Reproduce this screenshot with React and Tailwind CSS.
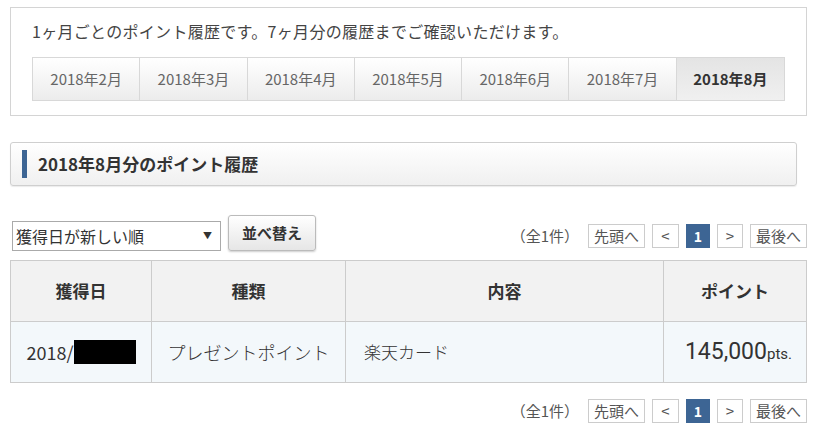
import React from 'react';

const months = ['2018年2月', '2018年3月', '2018年4月', '2018年5月', '2018年6月', '2018年7月', '2018年8月'];

const Pager = () => (
    <div className="flex items-center justify-end gap-[7px] text-[15px] text-[#555]">
        <span className="mr-[2px]">（全1件）</span>
        <span className="h-[24px] px-[5px] flex items-center border border-[#ccc] bg-white">先頭へ</span>
        <span className="h-[24px] w-[27px] flex items-center justify-center border border-[#ccc] bg-white">&lt;</span>
        <span className="h-[24px] w-[24px] flex items-center justify-center bg-[#3d6594] text-white font-bold text-[14px]">1</span>
        <span className="h-[24px] w-[26px] flex items-center justify-center border border-[#ccc] bg-white">&gt;</span>
        <span className="h-[24px] px-[5px] flex items-center border border-[#ccc] bg-white">最後へ</span>
    </div>
);

export default function App() {
    return (
        <div
            className="w-[820px] h-[443px] overflow-hidden bg-white pl-[10px] pr-[13px] text-[#333]"
            style={{ fontFamily: '"Noto Sans CJK JP", "Noto Sans", sans-serif' }}
        >
            {/* month selector */}
            <div className="mt-[7px] border border-[#d4d4d4] px-[21px] pt-[11px] pb-[14px]">
                <p className="text-[16px] leading-[24px] tracking-[0.3px] text-[#444]">1ヶ月ごとのポイント履歴です。7ヶ月分の履歴までご確認いただけます。</p>
                <div className="mt-[14px] grid grid-cols-7 border border-[#d8d8d8]">
                    {months.map((m, i) => (
                        <div
                            key={m}
                            className={
                                i === months.length - 1
                                    ? 'h-[42px] flex items-center justify-center bg-gradient-to-b from-[#e4e4e4] to-[#f0f0f0] text-[15px] font-bold text-[#333]'
                                    : 'h-[42px] flex items-center justify-center border-r border-[#d8d8d8] bg-gradient-to-b from-white to-[#ececec] text-[15px] text-[#666]'
                            }
                        >
                            {m}
                        </div>
                    ))}
                </div>
            </div>

            {/* section header */}
            <div className="mt-[26px] w-[787px] h-[44px] flex items-center border border-[#cfcfcf] rounded-[3px] bg-gradient-to-b from-white to-[#f0f0f0] shadow-[0_1px_1px_rgba(0,0,0,0.08)] pl-[11px]">
                <span className="w-[5px] h-[28px] bg-[#3d6594] mr-[11px]"></span>
                <h2 className="text-[17px] font-bold text-[#333]">2018年8月分のポイント履歴</h2>
            </div>

            {/* sort + pager */}
            <div className="mt-[29px] flex items-center">
                <div className="mt-[6px] ml-[2px] w-[209px] h-[30px] border border-[#aaa] bg-white flex items-center justify-between pl-[3px] pr-[8px] text-[16px] text-[#333]">
                    <span>獲得日が新しい順</span>
                    <span className="text-[9px]">▼</span>
                </div>
                <button className="ml-[7px] w-[88px] h-[36px] border border-[#bbb] rounded-[3px] bg-gradient-to-b from-white to-[#e6e6e6] shadow-[0_1px_2px_rgba(0,0,0,0.2)] text-[15px] font-bold text-[#333]">
                    並べ替え
                </button>
                <div className="flex-1 mt-[6px]">
                    <Pager />
                </div>
            </div>

            {/* table */}
            <table className="mt-[9px] w-[797px] border-collapse border border-[#ccc]">
                <thead>
                    <tr className="h-[61px] bg-[#f2f2f2] text-[17px] font-bold text-[#333]">
                        <th className="w-[141px] border border-[#ccc]">獲得日</th>
                        <th className="w-[194px] border border-[#ccc]">種類</th>
                        <th className="w-[318px] border border-[#ccc]">内容</th>
                        <th className="border border-[#ccc]">ポイント</th>
                    </tr>
                </thead>
                <tbody>
                    <tr className="h-[61px] bg-[#f3f8fb] text-[17px] text-[#333]">
                        <td className="border border-[#ccc] text-center">
                            <span className="inline-flex items-center text-[18px]">
                                2018/
                                <span className="inline-block w-[62px] h-[24px] bg-black"></span>
                            </span>
                        </td>
                        <td className="border border-[#ccc] text-center font-light text-[18px]">プレゼントポイント</td>
                        <td className="border border-[#ccc] pl-[18px] font-light">楽天カード</td>
                        <td className="border border-[#ccc] text-right pr-[14px]" style={{ fontFamily: 'Roboto, sans-serif' }}>
                            <span className="text-[23px]">145,000</span>
                            <span className="text-[15px]">pts.</span>
                        </td>
                    </tr>
                </tbody>
            </table>

            <div className="mt-[16px]">
                <Pager />
            </div>
        </div>
    );
}
